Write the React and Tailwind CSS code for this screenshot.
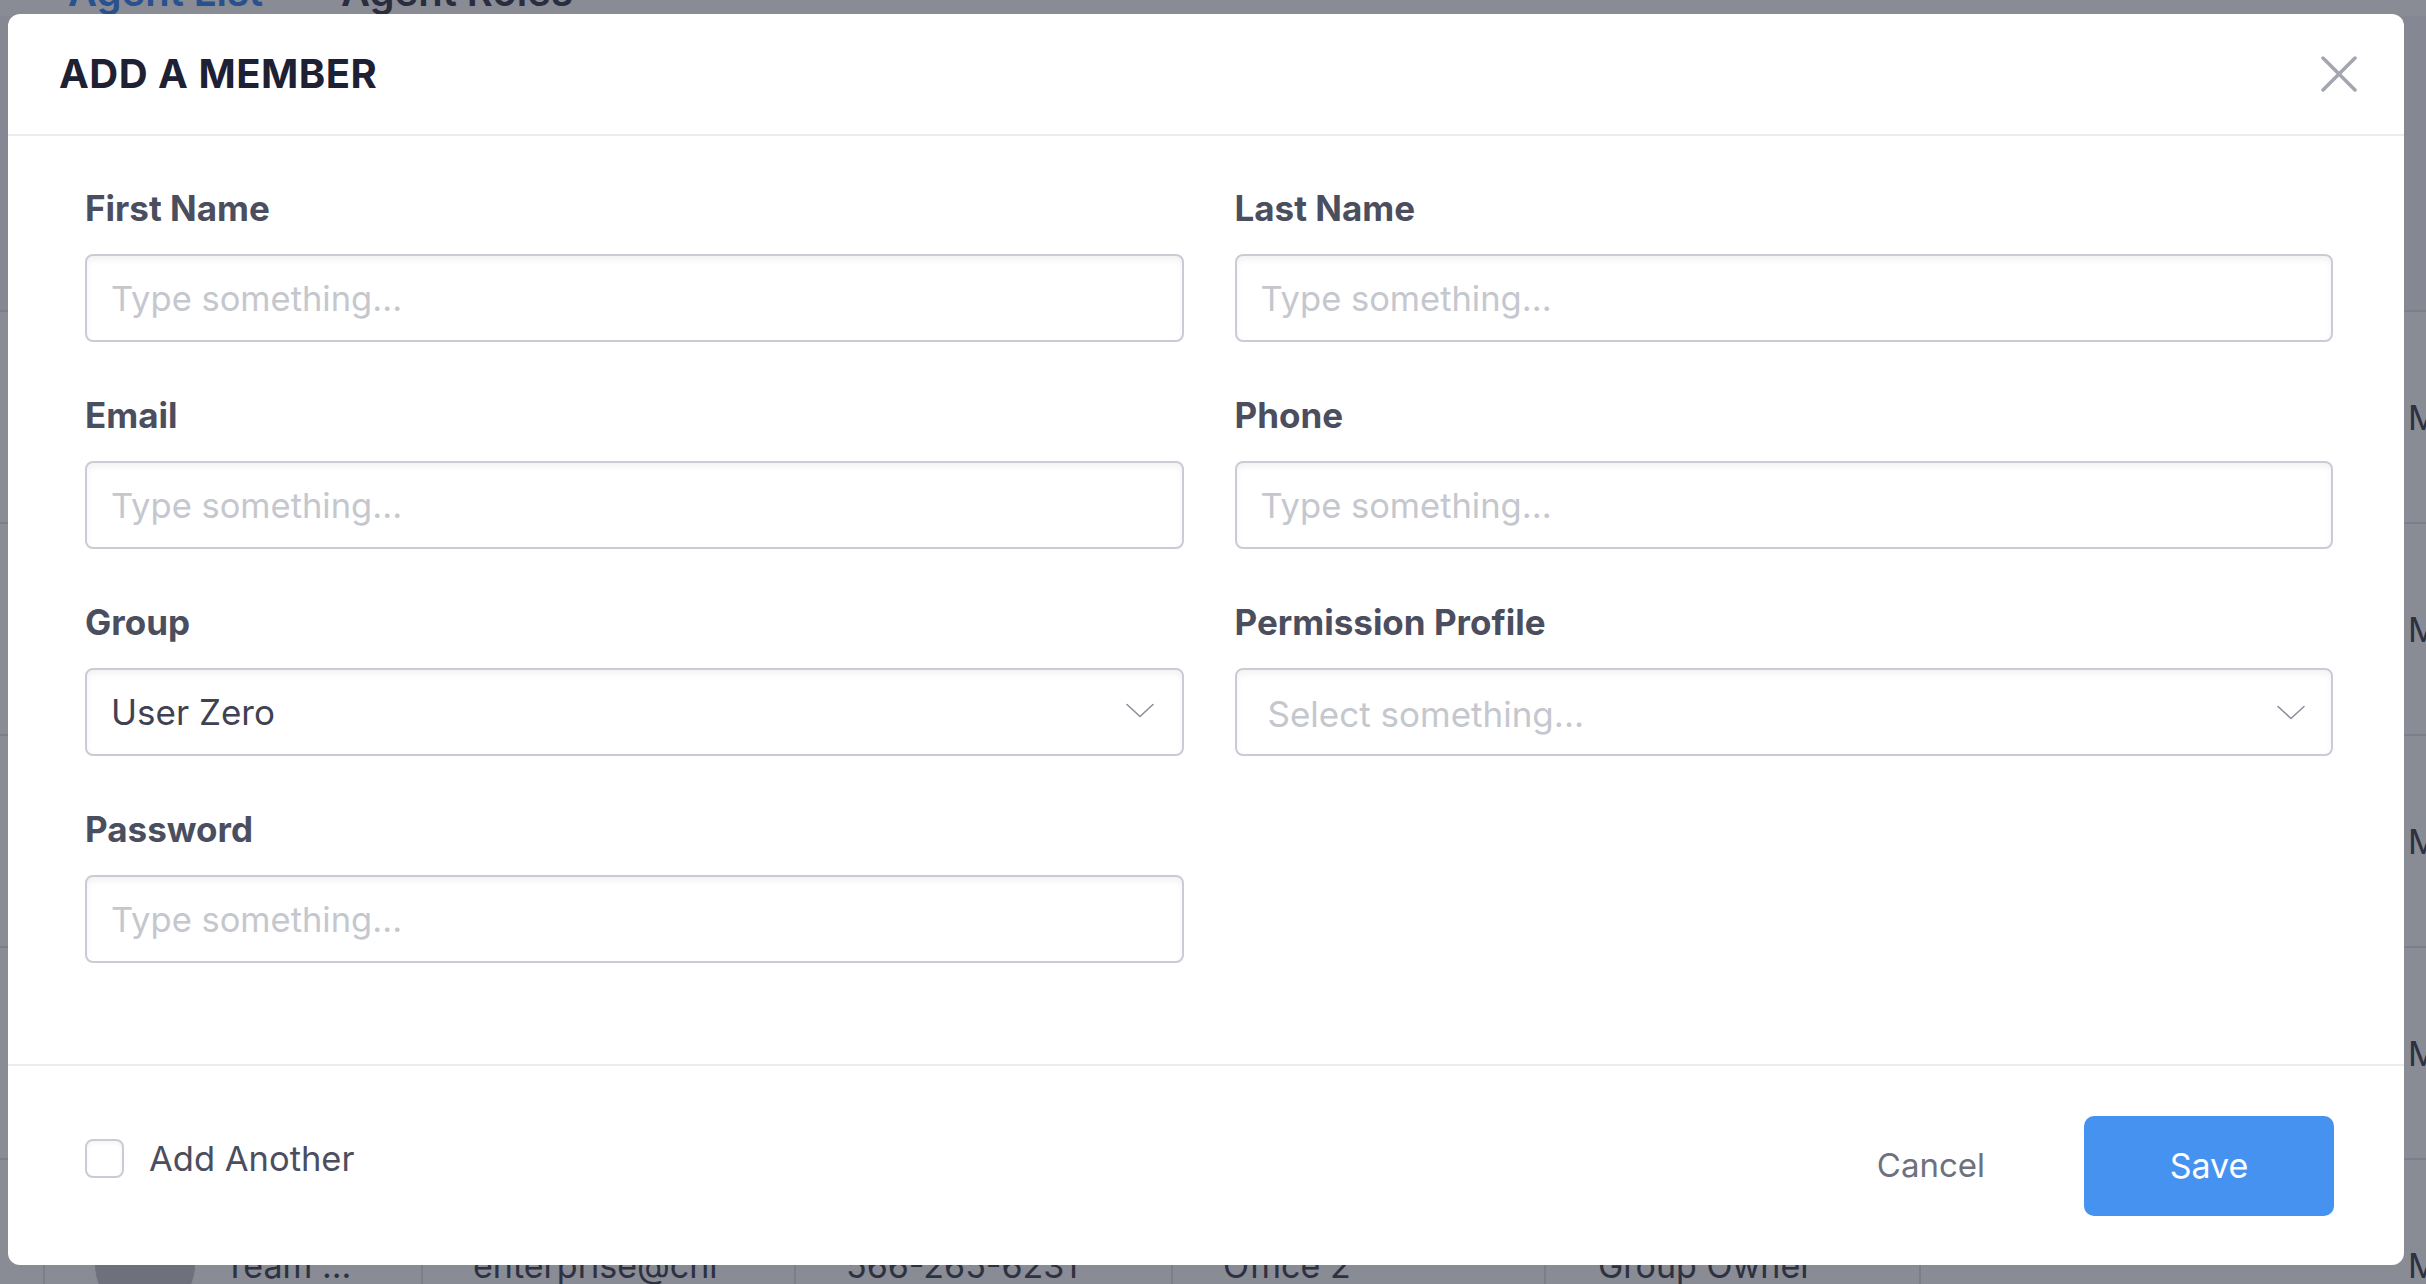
import React from "react";

function Label({ children }) {
  return (
    <div className="h-[40px] flex items-center text-[35px] leading-none font-bold text-[#4b4e5e]">
      {children}
    </div>
  );
}

function TextField({ label, placeholder = "Type something..." }) {
  return (
    <div className="flex flex-col">
      <Label>{label}</Label>
      <input
        type="text"
        placeholder={placeholder}
        className="mt-[26px] h-[88px] w-full rounded-[8px] border-2 border-[#c9ccd4] bg-white pl-[24px] text-[34.5px] text-[#3f4253] placeholder:text-[#c5c7ce] shadow-[inset_0_4px_6px_rgba(0,0,0,0.05)] outline-none font-['Inter',sans-serif]"
      />
    </div>
  );
}

function Chevron() {
  return (
    <svg width="28" height="15" viewBox="0 0 28 15" fill="none">
      <polyline
        points="1,1.5 14,13.5 27,1.5"
        stroke="#8a8d99"
        strokeWidth="1.5"
        strokeLinecap="round"
        strokeLinejoin="round"
      />
    </svg>
  );
}

function SelectField({ label, value, placeholder }) {
  return (
    <div className="flex flex-col">
      <Label>{label}</Label>
      <div className="mt-[26px] h-[88px] w-full rounded-[8px] border-2 border-[#c9ccd4] bg-white shadow-[inset_0_4px_6px_rgba(0,0,0,0.05)] flex items-center justify-between">
        {value ? (
          <span className="pl-[24px] text-[35px] text-[#3f4253]">{value}</span>
        ) : (
          <span className="pl-[31px] pt-[4px] text-[35px] text-[#c5c7ce]">{placeholder}</span>
        )}
        <span className={value ? "pr-[28px] pb-[4px]" : "pr-[26px]"}>
          <Chevron />
        </span>
      </div>
    </div>
  );
}

// Rows of the table behind the dialog; only the last row's cells peek out below it.
const rows = [
  ["", "", "", "", ""],
  ["", "", "", "", ""],
  ["", "", "", "", ""],
  ["", "", "", "", ""],
  ["Team ...", "enterprise@chi", "566-265-6231", "Office 2", "Group Owner"],
];

function Background() {
  return (
    <div className="absolute inset-0 flex flex-col bg-white">
      <div className="shrink-0 -mt-[32px] h-[48px] flex items-center pl-[68px] gap-[78px] text-[40px] leading-[48px] font-semibold">
        <span className="text-[#3d8af0]">Agent List</span>
        <span className="text-[#3f4350]">Agent Roles</span>
      </div>
      <div className="shrink-0 h-[296px] border-b-2 border-[#e3e5ea] bg-[#f6f7f9]" />
      {rows.map((r, i) => (
        <div
          key={i}
          className="h-[212px] shrink-0 flex items-stretch border-b-2 border-[#e3e5ea] text-[34px] text-[#474a55]"
        >
          <div className="w-[43px] shrink-0" />
          <div className="w-[378px] shrink-0 flex items-center border-l-2 border-[#e3e5ea] pl-[50px] gap-[29px]">
            <div className="w-[100px] h-[100px] rounded-full bg-[#c9cacd] shrink-0" />
            <span className="whitespace-nowrap">{r[0]}</span>
          </div>
          <div className="w-[373px] shrink-0 flex items-center border-l-2 border-[#e3e5ea] pl-[50px] whitespace-nowrap overflow-hidden">
            {r[1]}
          </div>
          <div className="w-[377px] shrink-0 flex items-center border-l-2 border-[#e3e5ea] pl-[50px] whitespace-nowrap">
            {r[2]}
          </div>
          <div className="w-[373px] shrink-0 flex items-center border-l-2 border-[#e3e5ea] pl-[50px] whitespace-nowrap">
            {r[3]}
          </div>
          <div className="w-[375px] shrink-0 flex items-center border-l-2 border-[#e3e5ea] pl-[52px] whitespace-nowrap">
            {r[4]}
          </div>
          <div className="w-[437px] shrink-0 border-l-2 border-[#e3e5ea]" />
          <div className="flex items-center pl-[52px] whitespace-nowrap">More</div>
        </div>
      ))}
    </div>
  );
}

export default function App() {
  return (
    <div className="relative w-[2426px] h-[1284px] overflow-hidden font-['Inter',sans-serif]">
      <Background />
      <div className="absolute inset-0 bg-[rgba(19,23,43,0.5)]" />

      <div className="absolute left-[8px] top-[14px] w-[2396px] h-[1251px] rounded-[12px] bg-white flex flex-col overflow-hidden">
        {/* Header */}
        <div className="h-[122px] shrink-0 flex items-center justify-between border-b-2 border-[#ebebf0] pl-[51px] pr-[47px]">
          <h2 className="text-[40px] font-bold tracking-[0.5px] text-[#1e2033]">ADD A MEMBER</h2>
          <button className="w-[36px] h-[36px] flex items-center justify-center">
            <svg width="36" height="36" viewBox="0 0 36 36" fill="none">
              <line x1="2" y1="2" x2="34" y2="34" stroke="#a3a6ae" strokeWidth="3.5" strokeLinecap="round" />
              <line x1="34" y1="2" x2="2" y2="34" stroke="#a3a6ae" strokeWidth="3.5" strokeLinecap="round" />
            </svg>
          </button>
        </div>

        {/* Body */}
        <div className="shrink-0 pt-[52px] pb-[101px] pl-[77px] pr-[71px] grid grid-cols-2 gap-x-[51px] gap-y-[53px]">
          <TextField label="First Name" />
          <TextField label="Last Name" />
          <TextField label="Email" />
          <TextField label="Phone" />
          <SelectField label="Group" value="User Zero" />
          <SelectField label="Permission Profile" placeholder="Select something..." />
          <TextField label="Password" />
        </div>

        {/* Footer */}
        <div className="flex-1 flex items-center justify-between border-t-2 border-[#ebebf0] pl-[77px] pr-[70px]">
          <label className="flex items-center gap-[25px] mb-[14px]">
            <span className="w-[39px] h-[39px] rounded-[8px] border-2 border-[#c9ccd4] bg-white shadow-[inset_0_2px_4px_rgba(0,0,0,0.05)]" />
            <span className="text-[34.5px] text-[#4b4e5e]">Add Another</span>
          </label>
          <div className="flex items-center gap-[99px]">
            <button className="text-[33px] text-[#6e717d]">Cancel</button>
            <button className="w-[250px] h-[100px] rounded-[10px] bg-[#4592f1] text-[34px] text-white">
              Save
            </button>
          </div>
        </div>
      </div>
    </div>
  );
}
